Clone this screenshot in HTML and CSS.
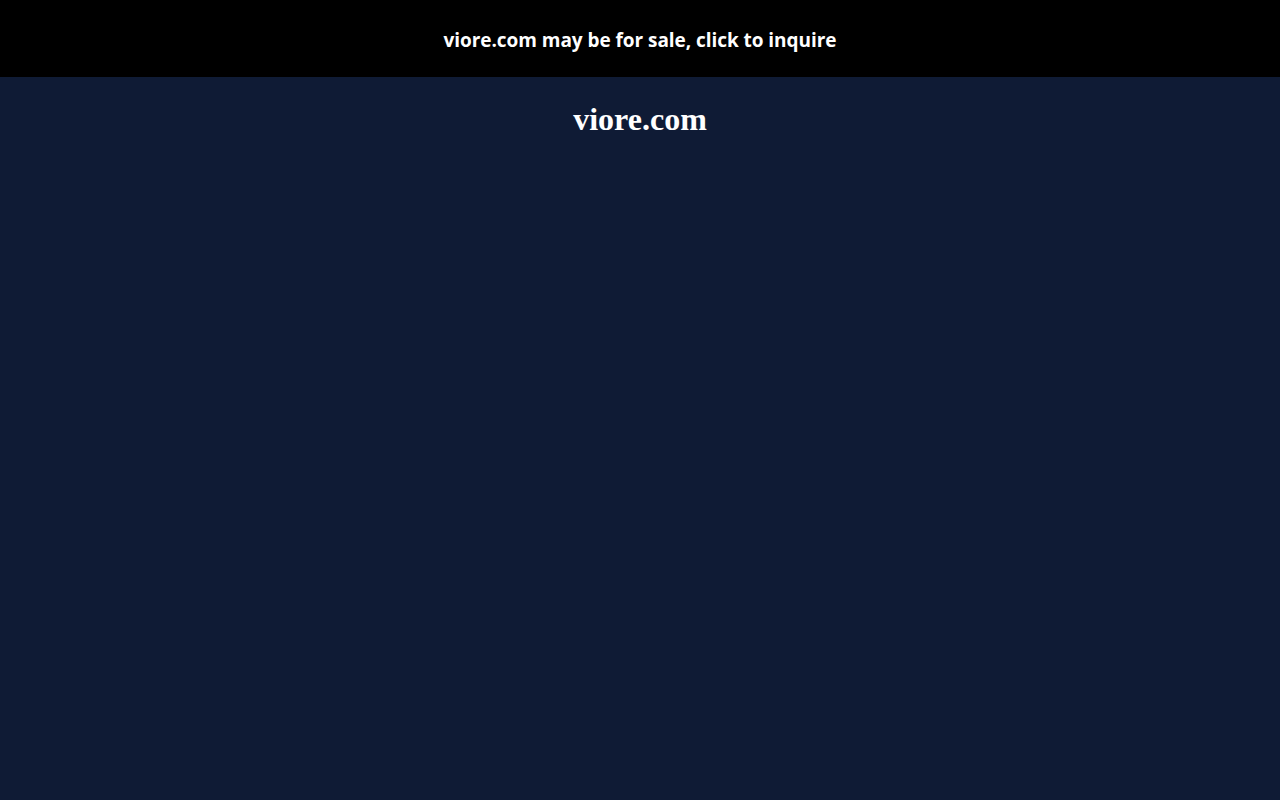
FILE: index.html
```html
<!DOCTYPE html>
<html>
<head>
<meta charset="utf-8">
<title>viore.com</title>
<link rel="stylesheet" href="styles.css">
</head>
<body>
<a class="banner" href="#">viore.com may be for sale, click to inquire</a>
<h1 class="title">viore.com</h1>
</body>
</html>
```

FILE: styles.css
```css
html, body {
  margin: 0;
  padding: 0;
  background: #0f1b35;
  height: 100%;
}
.banner {
  display: flex;
  align-items: center;
  justify-content: center;
  box-sizing: border-box;
  height: 77px;
  padding-top: 2px;
  background: #000;
  color: #fff;
  text-decoration: none;
  font-family: "Open Sans", "Noto Sans", sans-serif;
  font-weight: 700;
  font-size: 19px;
  letter-spacing: -0.05px;
}
.title {
  margin: 24px 0 0;
  text-align: center;
  color: #fff;
  font-family: "Liberation Serif", serif;
  font-weight: 700;
  font-size: 32px;
}
```
